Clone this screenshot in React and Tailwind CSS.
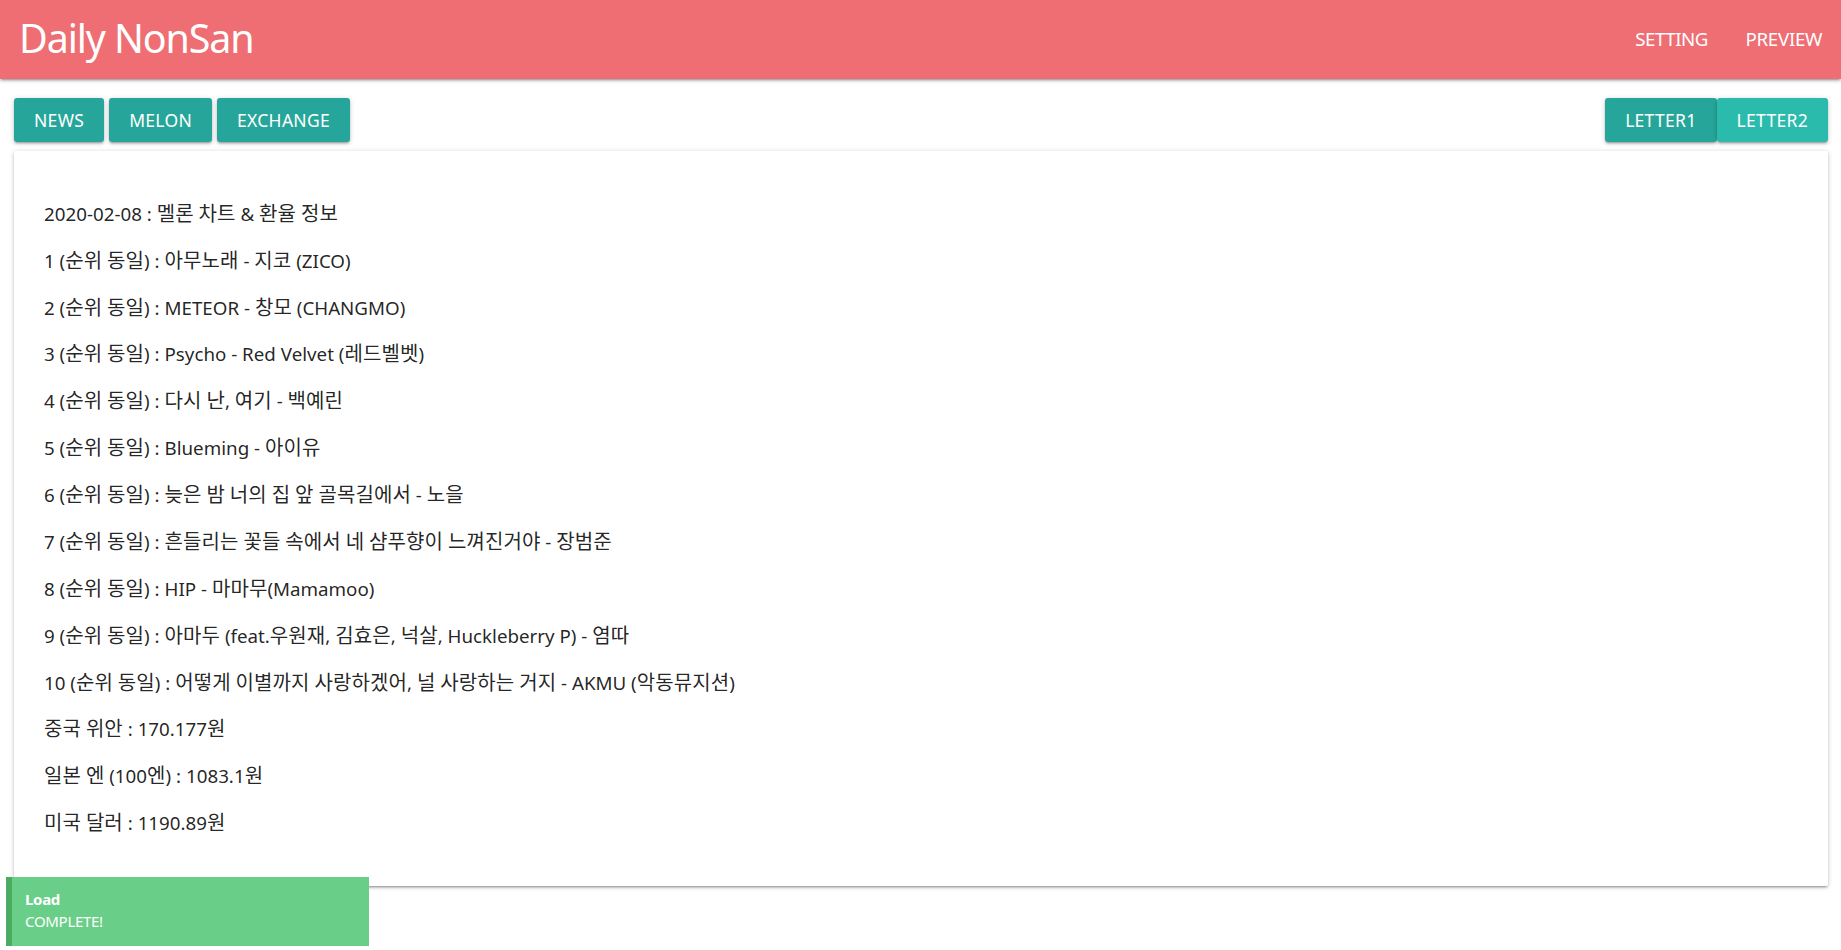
const font = { fontFamily: '"Noto Sans", "Noto Sans CJK KR", sans-serif' };

const lines = [
  "2020-02-08 : 멜론 차트 & 환율 정보",
  "1 (순위 동일) : 아무노래 - 지코 (ZICO)",
  "2 (순위 동일) : METEOR - 창모 (CHANGMO)",
  "3 (순위 동일) : Psycho - Red Velvet (레드벨벳)",
  "4 (순위 동일) : 다시 난, 여기 - 백예린",
  "5 (순위 동일) : Blueming - 아이유",
  "6 (순위 동일) : 늦은 밤 너의 집 앞 골목길에서 - 노을",
  "7 (순위 동일) : 흔들리는 꽃들 속에서 네 샴푸향이 느껴진거야 - 장범준",
  "8 (순위 동일) : HIP - 마마무(Mamamoo)",
  "9 (순위 동일) : 아마두 (feat.우원재, 김효은, 넉살, Huckleberry P) - 염따",
  "10 (순위 동일) : 어떻게 이별까지 사랑하겠어, 널 사랑하는 거지 - AKMU (악동뮤지션)",
  "중국 위안 : 170.177원",
  "일본 엔 (100엔) : 1083.1원",
  "미국 달러 : 1190.89원",
];

// hangul in the original falls back to a larger-set font, so bump those runs a bit
const Mixed = ({ text }) =>
  text.split(/([\uAC00-\uD7A3]+)/).map((part, i) =>
    /[\uAC00-\uD7A3]/.test(part) ? (
      <span key={i} className="text-[20px] tracking-[0.1px]">
        {part}
      </span>
    ) : (
      part
    )
  );

const shadow =
  "shadow-[0_2px_2px_0_rgba(0,0,0,0.14),0_3px_1px_-2px_rgba(0,0,0,0.12),0_1px_5px_0_rgba(0,0,0,0.2)]";

const Btn = ({ children, light }) => (
  <button
    className={`h-[44px] px-[20px] rounded-[3px] text-white text-[17.5px] tracking-[0.3px] uppercase ${shadow} ${
      light ? "bg-[#2bbbad]" : "bg-[#26a69a]"
    }`}
  >
    {children}
  </button>
);

export default function App() {
  return (
    <div className="min-h-[950px] bg-white text-[rgba(0,0,0,0.87)]" style={font}>
      <nav className={`h-[79px] bg-[#ee6e73] flex items-center justify-between ${shadow}`}>
        <span className="pl-[19px] pb-[1px] text-white text-[39.4px] tracking-[-1.1px] leading-none">
          Daily NonSan
        </span>
        <ul className="flex items-center">
          <li className="px-[18.75px] text-white text-[18.75px] tracking-[-0.5px]">SETTING</li>
          <li className="px-[18.75px] text-white text-[18.75px] tracking-[-0.3px]">PREVIEW</li>
        </ul>
      </nav>

      <div className="pl-[14px] pr-[13px] pt-[19px]">
        <div className="flex justify-between">
          <div className="flex gap-[5px]">
            <Btn>News</Btn>
            <Btn>Melon</Btn>
            <Btn>Exchange</Btn>
          </div>
          <div className="flex">
            <Btn>Letter1</Btn>
            <Btn light>Letter2</Btn>
          </div>
        </div>

        <div className={`mt-[9px] bg-white rounded-[2px] p-[30px] ${shadow}`}>
          {lines.map((line) => (
            <p key={line} className="text-[18.75px] leading-[28.125px] my-[18.75px]">
              <Mixed text={line} />
            </p>
          ))}
        </div>
      </div>

      <div className="fixed left-[6px] bottom-[4px] w-[363px] h-[69px] bg-[#69ce87] border-l-[6px] border-[#4aac62] px-[13px] py-[11px] text-white text-[15px] leading-[22px] tracking-[-0.3px]">
        <div className="font-bold">Load</div>
        <div>COMPLETE!</div>
      </div>
    </div>
  );
}
